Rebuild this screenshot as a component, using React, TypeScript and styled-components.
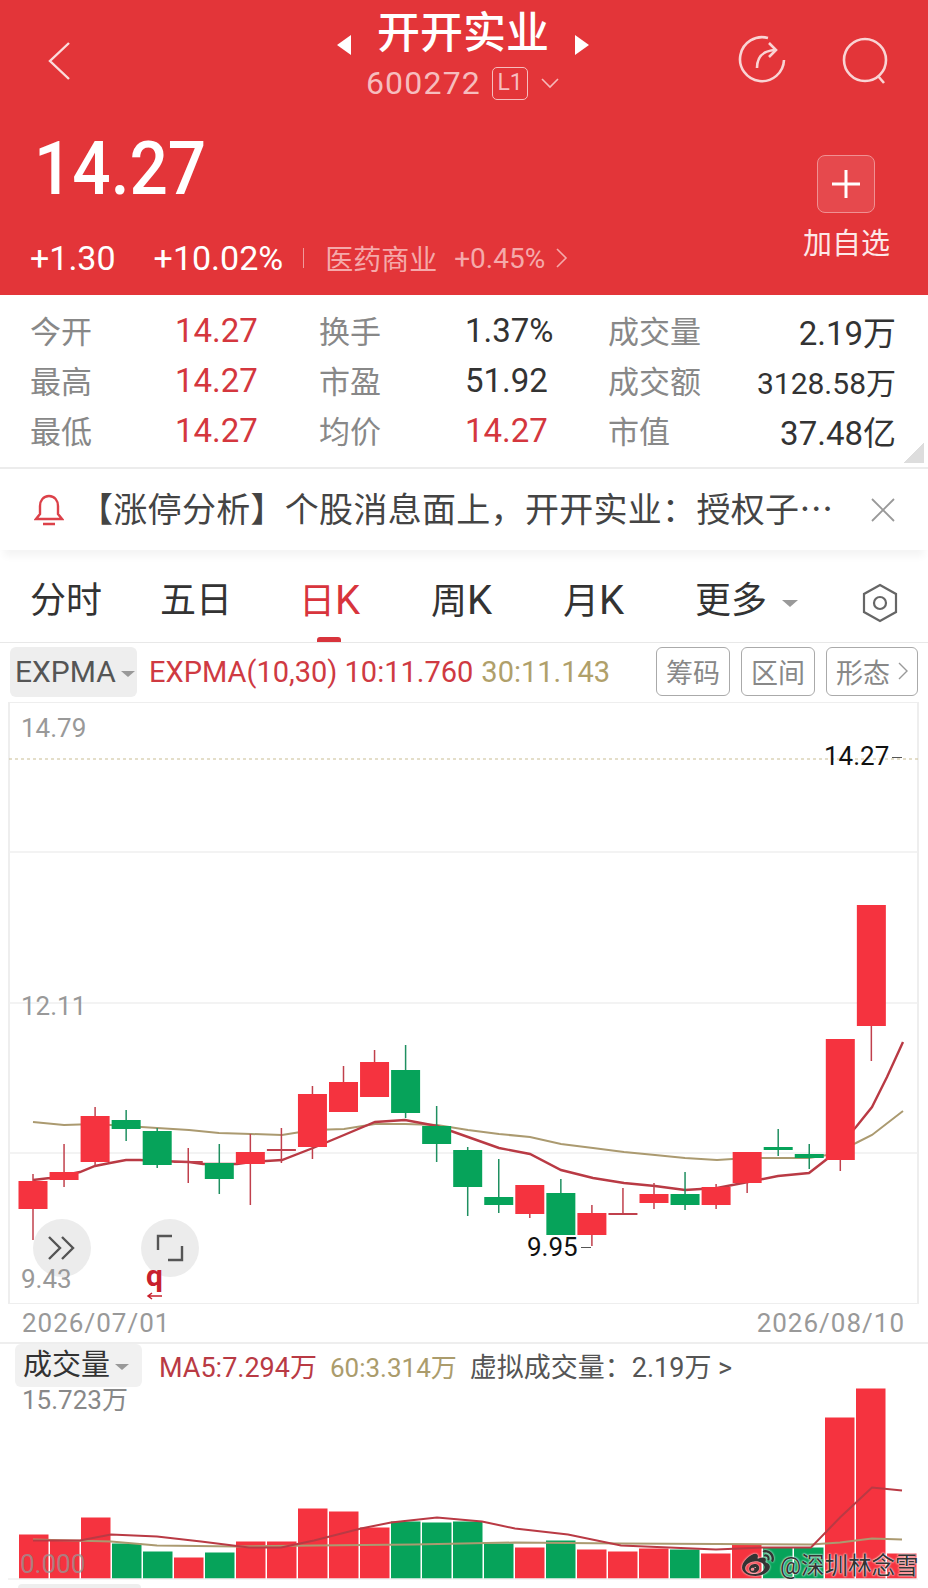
import React from 'react';
import styled, { createGlobalStyle } from 'styled-components';
import { FaWeibo } from 'react-icons/fa';

type Candle = { x: number; w: number; top: number; bottom: number; high: number; low: number; up: boolean };

const c = (i: number, top: number, bottom: number, high: number, low: number, up: boolean): Candle => ({
    x: 18.5 + i * 31.05,
    w: 29,
    top,
    bottom,
    high,
    low,
    up,
});

const candles: Candle[] = [
    c(0, 1181, 1209, 1174, 1240, true),
    c(1, 1172, 1180, 1144, 1187, true),
    c(2, 1116, 1162, 1107, 1167, true),
    c(3, 1120, 1129, 1110, 1141, false),
    c(4, 1131, 1165, 1128, 1168, false),
    c(5, 1161, 1163, 1148, 1183, true),
    c(6, 1163, 1179, 1144, 1194, false),
    c(7, 1152, 1164, 1134, 1205, true),
    c(8, 1149, 1151, 1128, 1163, true),
    c(9, 1094, 1147, 1086, 1159, true),
    c(10, 1082, 1112, 1066, 1112, true),
    c(11, 1062, 1097, 1050, 1097, true),
    c(12, 1070, 1113, 1045, 1118, false),
    c(13, 1126, 1144, 1106, 1162, false),
    c(14, 1150, 1187, 1147, 1216, false),
    c(15, 1197, 1205, 1159, 1213, false),
    c(16, 1185, 1214, 1185, 1218, true),
    c(17, 1193, 1235, 1179, 1235, false),
    c(18, 1213, 1235, 1205, 1246, true),
    c(19, 1213, 1215, 1188, 1215, true),
    c(20, 1194, 1203, 1183, 1209, true),
    c(21, 1194, 1205, 1172, 1210, false),
    c(22, 1187, 1205, 1184, 1209, true),
    c(23, 1152, 1183, 1152, 1193, true),
    c(24, 1147, 1150, 1129, 1156, false),
    c(25, 1154, 1158, 1144, 1169, false),
    c(26, 1039, 1160, 1039, 1171, true),
    c(27, 905, 1026, 905, 1061, true),
];

const ema10 =
    '33,1180 50,1178 80,1172 95,1166 110,1163 126,1160 140,1160 157,1161 189,1162 203,1164 219,1164 237,1164 251,1162 282,1160 313,1148 344,1135 375,1122 405,1120 437,1126 468,1137 499,1148 530,1154 561,1170 593,1178 624,1183 655,1186 685,1190 717,1188 748,1182 778,1176 809,1173 827,1159 856,1127 872,1107 887,1077 903,1042';
const ema30 =
    '33,1122 64,1125 95,1124 126,1126 157,1128 189,1130 219,1133 251,1134 282,1135 313,1130 344,1129 375,1124 405,1124 437,1125 468,1130 499,1134 530,1137 561,1144 593,1148 624,1152 655,1155 685,1158 717,1160 748,1158 778,1158 809,1158 827,1155 856,1143 872,1135 903,1111';

const volumes: { top: number; up: boolean }[] = [
    { top: 1534, up: true },
    { top: 1540, up: true },
    { top: 1517, up: true },
    { top: 1543, up: false },
    { top: 1551, up: false },
    { top: 1557, up: true },
    { top: 1552, up: false },
    { top: 1541, up: true },
    { top: 1541, up: true },
    { top: 1508, up: true },
    { top: 1511, up: true },
    { top: 1527, up: true },
    { top: 1521, up: false },
    { top: 1522, up: false },
    { top: 1521, up: false },
    { top: 1543, up: false },
    { top: 1547, up: true },
    { top: 1540, up: false },
    { top: 1549, up: true },
    { top: 1551, up: true },
    { top: 1548, up: true },
    { top: 1549, up: false },
    { top: 1553, up: true },
    { top: 1544, up: true },
    { top: 1547, up: false },
    { top: 1547, up: false },
    { top: 1417, up: true },
    { top: 1388, up: true },
    { top: 1553, up: true },
];

const ma5 =
    '33,1540 80,1540 111,1534 157,1536 201,1541 249,1547 281,1547 314,1540 361,1528 391,1522 437,1517 482,1521 515,1528 568,1534 621,1545 669,1547 716,1549 763,1547 811,1547 840,1517 872,1487 902,1490';
const ma60 =
    '33,1539 111,1541 157,1545 237,1546 314,1545 414,1544 515,1542 621,1543 811,1544 840,1542 872,1538 902,1539';

const stats = [
    ['今开', '14.27', '换手', '1.37%', '成交量', '2.19万'],
    ['最高', '14.27', '市盈', '51.92', '成交额', '3128.58万'],
    ['最低', '14.27', '均价', '14.27', '市值', '37.48亿'],
];

const App = () => {
    return (
        <Page>
            <GlobalStyle />
            <Header>
                <NavRow>
                    <BackIcon viewBox="0 0 24 40">
                        <path d="M22 2 L3 20 L22 38" />
                    </BackIcon>
                    <TitleBlock>
                        <TitleLine>
                            <svg width="16" height="22" viewBox="0 0 16 22">
                                <path d="M15 1 L1 11 L15 21 Z" fill="#fff" />
                            </svg>
                            <Title>开开实业</Title>
                            <svg width="16" height="22" viewBox="0 0 16 22">
                                <path d="M1 1 L15 11 L1 21 Z" fill="#fff" />
                            </svg>
                        </TitleLine>
                        <CodeLine>
                            <Code>600272</Code>
                            <LevelBadge>L1</LevelBadge>
                            <svg width="20" height="12" viewBox="0 0 20 12">
                                <path d="M2 2 L10 10 L18 2" fill="none" stroke="#f6b9ba" strokeWidth="1.6" />
                            </svg>
                        </CodeLine>
                    </TitleBlock>
                    <NavIcons>
                        <NavIcon viewBox="0 0 50 50">
                            <path d="M31 3 A22 22 0 1 0 47 25" />
                            <path d="M20 33 C20 22 25 16 38 15" />
                            <path d="M32 8 L39 15 L32 22" />
                        </NavIcon>
                        <NavIcon viewBox="0 0 50 50">
                            <circle cx="25" cy="25" r="21" />
                            <path d="M38 41 L44 48" />
                        </NavIcon>
                    </NavIcons>
                </NavRow>
                <QuoteRow>
                    <QuoteLeft>
                        <Price>14.27</Price>
                        <ChangeRow>
                            <Change>+1.30</Change>
                            <Change>+10.02%</Change>
                            <Divider />
                            <Sector>医药商业</Sector>
                            <SectorChange>+0.45%</SectorChange>
                            <svg width="13" height="22" viewBox="0 0 13 22">
                                <path d="M2 2 L11 11 L2 20" fill="none" stroke="#f5a9aa" strokeWidth="1.6" />
                            </svg>
                        </ChangeRow>
                    </QuoteLeft>
                    <AddBlock>
                        <AddButton>
                            <svg width="32" height="32" viewBox="0 0 32 32">
                                <path d="M16 2 V30 M2 16 H30" stroke="#fff" strokeWidth="3" />
                            </svg>
                        </AddButton>
                        <AddLabel>加自选</AddLabel>
                    </AddBlock>
                </QuoteRow>
            </Header>

            <Stats>
                {stats.map((row) => (
                    <React.Fragment key={row[0]}>
                        <StatLabel>{row[0]}</StatLabel>
                        <StatValue $red>{row[1]}</StatValue>
                        <StatLabel>{row[2]}</StatLabel>
                        <StatValue $red={row[3] === '14.27'}>{row[3]}</StatValue>
                        <StatLabel>{row[4]}</StatLabel>
                        <StatValue $right $small={row[5].length > 7}>{row[5]}</StatValue>
                    </React.Fragment>
                ))}
                <CornerMark />
            </Stats>

            <Notice>
                <svg width="30" height="34" viewBox="0 0 30 34">
                    <path
                        d="M15 3 C9 3 6 8 6 13 V21 L2 26 H28 L24 21 V13 C24 8 21 3 15 3 Z M9 31 H21"
                        fill="none"
                        stroke="#dc4149"
                        strokeWidth="2.4"
                    />
                </svg>
                <NoticeText>【涨停分析】个股消息面上，开开实业：授权子…</NoticeText>
                <svg width="26" height="26" viewBox="0 0 26 26">
                    <path d="M2 2 L24 24 M24 2 L2 24" stroke="#999" strokeWidth="1.8" />
                </svg>
            </Notice>

            <Tabs>
                <Tab $w={130}>分时</Tab>
                <Tab $w={139}>五日</Tab>
                <Tab $active>
                    日<TabLetter>K</TabLetter>
                    <TabMark />
                </Tab>
                <Tab>
                    周<TabLetter>K</TabLetter>
                </Tab>
                <Tab>
                    月<TabLetter>K</TabLetter>
                </Tab>
                <Tab>
                    更多
                    <MoreArrow />
                </Tab>
                <Gear viewBox="0 0 36 40">
                    <path d="M18 2 L34 11 V29 L18 38 L2 29 V11 Z" />
                    <circle cx="18" cy="20" r="6" />
                </Gear>
            </Tabs>

            <IndicatorBar>
                <Picker>
                    EXPMA
                    <DownArrow $size={6} />
                </Picker>
                <IndicatorText $tone="#cf3a42">EXPMA(10,30) 10:11.760</IndicatorText>
                <IndicatorText $tone="#b0a06a">30:11.143</IndicatorText>
                <ChipGroup>
                    <Chip>筹码</Chip>
                    <Chip>区间</Chip>
                    <Chip>
                        形态
                        <svg width="10" height="20" viewBox="0 0 10 20">
                            <path d="M1 2 L9 10 L1 18" fill="none" stroke="#999" strokeWidth="1.4" />
                        </svg>
                    </Chip>
                </ChipGroup>
            </IndicatorBar>

            <PriceChart>
                <ChartSvg width="928" height="602" viewBox="0 702 928 602">
                    <rect x="9" y="702" width="909" height="602" fill="#fff" stroke="#eee" strokeWidth="2" />
                    {[852, 1003, 1153].map((y) => (
                        <line key={y} x1="9" x2="918" y1={y} y2={y} stroke="#efefef" strokeWidth="1.5" />
                    ))}
                    <line x1="9" x2="918" y1="759" y2="759" stroke="#c9bd94" strokeWidth="1.2" strokeDasharray="3 3" />
                    <polyline points={ema30} fill="none" stroke="#ab9a70" strokeWidth="2" />
                    <polyline points={ema10} fill="none" stroke="#b93a44" strokeWidth="2.4" />
                    {candles.map((k) => {
                        const tone = k.up ? '#f5333f' : '#06a35a';
                        const mid = k.x + k.w / 2;
                        const wick = k.up ? '#c0404c' : '#1f8f60';
                        return (
                            <g key={k.x}>
                                <line x1={mid} x2={mid} y1={k.high} y2={k.low} stroke={wick} strokeWidth="1.5" />
                                <rect x={k.x} y={k.top} width={k.w} height={k.bottom - k.top} fill={k.bottom - k.top < 3 ? wick : tone} />
                            </g>
                        );
                    })}
                </ChartSvg>
                <RoundButton $x={33}>
                    <svg width="30" height="26" viewBox="0 0 30 26">
                        <path d="M2 2 L13 13 L2 24 M15 2 L26 13 L15 24" fill="none" stroke="#555" strokeWidth="2.4" />
                    </svg>
                </RoundButton>
                <RoundButton $x={141}>
                    <svg width="28" height="28" viewBox="0 0 28 28">
                        <path d="M16 2 H2 V16 M12 26 H26 V12" fill="none" stroke="#555" strokeWidth="2.4" />
                    </svg>
                </RoundButton>
                <AxisLabel $x={21} $y={11}>14.79</AxisLabel>
                <AxisLabel $x={21} $y={289}>12.11</AxisLabel>
                <AxisLabel $x={21} $y={562}>9.43</AxisLabel>
                <PeakLabel $x={824} $y={39}>14.27</PeakLabel>
                <PeakDash $x={892} $y={55} />
                <PeakLabel $x={527} $y={530}>9.95</PeakLabel>
                <PeakDash $x={581} $y={545} />
                <Marker>q</Marker>
                <MarkerArrow width="16" height="8" viewBox="0 0 16 8">
                    <path d="M16 4 H2 M6 1 L2 4 L6 7" fill="none" stroke="#c8202c" strokeWidth="1.5" />
                </MarkerArrow>
            </PriceChart>

            <DateRow>
                <span>2026/07/01</span>
                <span>2026/08/10</span>
            </DateRow>

            <VolumeHeader>
                <VolumePicker>
                    成交量
                    <DownArrow $size={6} />
                </VolumePicker>
                <VolumeText $tone="#b93a44">MA5:7.294万</VolumeText>
                <VolumeText $tone="#ab9c6c" $size={26}>60:3.314万</VolumeText>
                <VolumeText $tone="#555">虚拟成交量：2.19万 &gt;</VolumeText>
            </VolumeHeader>

            <VolumeChart>
                <ChartSvg width="928" height="192" viewBox="0 1387.5 928 192">
                    {volumes.map((v, i) => (
                        <rect
                            key={i}
                            x={19 + i * 31}
                            y={v.top}
                            width="29.5"
                            height={1578 - v.top}
                            fill={v.up ? '#f5333f' : '#06a35a'}
                        />
                    ))}
                    <polyline points={ma60} fill="none" stroke="#ab9a70" strokeWidth="2" />
                    <polyline points={ma5} fill="none" stroke="#b93a44" strokeWidth="2" />
                    <line x1="8" x2="918" y1="1578.5" y2="1578.5" stroke="#e8e8e8" />
                </ChartSvg>
                <VolumeMax>15.723万</VolumeMax>
                <VolumeZero>0.000</VolumeZero>
                <Watermark>
                    <FaWeibo size={32} />
                    <span>@深圳林念雪</span>
                </Watermark>
            </VolumeChart>
            <BottomChip />
        </Page>
    );
};

const GlobalStyle = createGlobalStyle`
    html, body {
        margin: 0;
        padding: 0;
        background: #fff;
    }
`;

const Page = styled.div`
    width: 928px;
    height: 1588px;
    overflow: hidden;
    background: #fff;
    font-family: 'Roboto', 'Noto Sans CJK SC', sans-serif;
`;

/* Header */
const Header = styled.div`
    height: 295px;
    box-sizing: border-box;
    background: #e33539;
    color: #fff;
    display: flex;
    flex-flow: column;
`;

const NavRow = styled.div`
    height: 128px;
    display: grid;
    grid-template-columns: 1fr auto 1fr;
    padding: 0 49px 0 47px;
`;

const BackIcon = styled.svg`
    width: 24px;
    height: 40px;
    margin-top: 41px;
    fill: none;
    stroke: #fbdcdc;
    stroke-width: 2.4;
`;

const TitleBlock = styled.div`
    display: flex;
    flex-flow: column;
    align-items: center;
`;

const TitleLine = styled.div`
    display: flex;
    align-items: center;
    gap: 25px;
    height: 66px;

    svg {
        margin-top: 24px;
    }
`;

const Title = styled.div`
    font-size: 43px;
    line-height: 66px;
    font-weight: 500;
`;

const CodeLine = styled.div`
    display: flex;
    align-items: center;
    gap: 11px;
    height: 34px;
    color: #f6bdbe;

    svg {
        margin-left: 1px;
    }
`;

const Code = styled.div`
    font-size: 32px;
    letter-spacing: 1.2px;
`;

const LevelBadge = styled.div`
    width: 36px;
    height: 33px;
    box-sizing: border-box;
    border: 1.5px solid #f6bdbe;
    border-radius: 5px;
    font-size: 23px;
    line-height: 30px;
    text-align: center;
`;

const NavIcons = styled.div`
    display: flex;
    justify-content: flex-end;
    gap: 53px;
    margin-right: -11px;
    padding-top: 35px;
`;

const NavIcon = styled.svg`
    width: 50px;
    height: 50px;
    fill: none;
    stroke: #f9d4d4;
    stroke-width: 2.6;
`;

const QuoteRow = styled.div`
    flex: 1;
    display: flex;
    justify-content: space-between;
    padding: 0 38px 0 30px;
`;

const QuoteLeft = styled.div`
    display: flex;
    flex-flow: column;
`;

const Price = styled.div`
    font-size: 75px;
    line-height: 80px;
    font-weight: 500;
    margin-left: 4px;
    transform: scaleX(0.9);
    transform-origin: left;
`;

const ChangeRow = styled.div`
    display: flex;
    align-items: center;
    margin-top: 30px;
`;

const Change = styled.div`
    font-size: 34px;
    line-height: 40px;

    & + & {
        margin-left: 38px;
    }
`;

const Divider = styled.div`
    width: 1px;
    height: 20px;
    background: #f09a9b;
    margin: 0 21px 0 20px;
`;

const Sector = styled.div`
    font-size: 28px;
    color: #f5a9aa;
    margin-right: 17px;
`;

const SectorChange = styled.div`
    font-size: 28px;
    color: #f5a9aa;
    margin-right: 10px;
`;

const AddBlock = styled.div`
    display: flex;
    flex-flow: column;
    align-items: center;
    padding-top: 27px;
`;

const AddButton = styled.div`
    width: 58px;
    height: 58px;
    box-sizing: border-box;
    border: 1px solid #f09092;
    border-radius: 8px;
    background: #e6494d;
    display: flex;
    align-items: center;
    justify-content: center;
`;

const AddLabel = styled.div`
    font-size: 29px;
    margin-top: 7px;
    color: #fde8e8;
`;

/* Stats */
const Stats = styled.div`
    position: relative;
    height: 174px;
    box-sizing: border-box;
    padding: 9px 32px 0 30px;
    border-bottom: 2px solid #ececec;
    display: grid;
    grid-template-columns: 145px 144px 146px 143px auto 1fr;
    grid-auto-rows: 50px;
    align-items: center;
`;

const StatLabel = styled.div`
    font-size: 31px;
    color: #888;
`;

const StatValue = styled.div<{ $red?: boolean; $right?: boolean; $small?: boolean }>`
    padding-top: 3px;
    font-size: ${(p) => (p.$small ? 30 : 33)}px;
    color: ${(p) => (p.$red ? '#d4373e' : '#333')};
    text-align: ${(p) => (p.$right ? 'right' : 'left')};
    white-space: nowrap;
`;

const CornerMark = styled.div`
    position: absolute;
    right: 4px;
    bottom: 4px;
    width: 20px;
    height: 20px;
    background: linear-gradient(135deg, transparent 50%, #ddd 50%);
`;

/* Notice */
const Notice = styled.div`
    height: 81px;
    padding: 0 32px 0 34px;
    display: flex;
    align-items: center;
    background: #fff;
    box-shadow: 0 10px 8px -4px #f4f4f4;
    position: relative;
`;

const NoticeText = styled.div`
    flex: 1;
    margin-top: -4px;
    padding-left: 15px;
    font-family: 'Noto Sans CJK SC', sans-serif;
    font-size: 34px;
    letter-spacing: 0.3px;
    color: #444;
    white-space: nowrap;
`;

/* Tabs */
const Tabs = styled.div`
    height: 93px;
    box-sizing: border-box;
    padding: 10px 30px 0 30px;
    border-bottom: 1.5px solid #e8e8e8;
    display: flex;
    align-items: center;
`;

const Tab = styled.div<{ $active?: boolean; $w?: number }>`
    position: relative;
    width: ${(p) => p.$w ?? 132}px;
    height: 82px;
    line-height: 82px;
    font-size: 36px;
    color: ${(p) => (p.$active ? '#d8343c' : '#333')};
`;

const TabLetter = styled.span`
    font-size: 40px;
`;

const TabMark = styled.div`
    position: absolute;
    left: 18px;
    bottom: 0;
    width: 24px;
    height: 5px;
    border-radius: 3px 3px 0 0;
    background: #d8343c;
`;

const DownArrow = styled.span<{ $size: number }>`
    display: inline-block;
    margin-left: 5px;
    vertical-align: middle;
    border-style: solid;
    border-width: ${(p) => p.$size}px ${(p) => p.$size + 1}px 0;
    border-color: #999 transparent transparent;
`;

const MoreArrow = styled(DownArrow).attrs({ $size: 7 })`
    margin-left: 15px;
`;

const Gear = styled.svg`
    width: 36px;
    height: 40px;
    margin-top: 4px;
    margin-left: auto;
    margin-right: 0;
    fill: none;
    stroke: #666;
    stroke-width: 2.2;
`;

/* Indicator bar */
const IndicatorBar = styled.div`
    height: 56px;
    box-sizing: border-box;
    padding: 2px 10px 0 10px;
    display: flex;
    align-items: center;
`;

const Picker = styled.div`
    width: 127px;
    height: 50px;
    box-sizing: border-box;
    padding-left: 5px;
    background: #eee;
    border-radius: 6px;
    font-size: 30px;
    line-height: 50px;
    color: #555;
    white-space: nowrap;
    margin-right: 12px;
`;

const IndicatorText = styled.div<{ $tone: string }>`
    font-size: 29px;
    color: ${(p) => p.$tone};
    margin-right: 8px;
    white-space: nowrap;
`;

const ChipGroup = styled.div`
    margin-left: auto;
    margin-top: -2px;
    display: flex;
    gap: 11px;
`;

const Chip = styled.div`
    height: 49px;
    padding: 0 9px;
    box-sizing: border-box;
    border: 1.5px solid #aaa;
    border-radius: 6px;
    display: flex;
    align-items: center;
    gap: 8px;
    font-size: 27px;
    color: #888;
`;

/* Price chart */
const PriceChart = styled.div`
    position: relative;
    height: 602px;
    margin-top: 2.5px;
`;

const ChartSvg = styled.svg`
    display: block;
`;

const AxisLabel = styled.div<{ $x: number; $y: number }>`
    position: absolute;
    left: ${(p) => p.$x}px;
    top: ${(p) => p.$y}px;
    font-size: 26px;
    line-height: 30px;
    color: #999;
`;

const PeakLabel = styled.div<{ $x: number; $y: number }>`
    position: absolute;
    left: ${(p) => p.$x}px;
    top: ${(p) => p.$y}px;
    font-size: 26px;
    line-height: 30px;
    color: #111;
`;

const PeakDash = styled.div<{ $x: number; $y: number }>`
    position: absolute;
    left: ${(p) => p.$x}px;
    top: ${(p) => p.$y}px;
    width: 10px;
    height: 1px;
    background: #555;
`;

const RoundButton = styled.div<{ $x: number }>`
    position: absolute;
    left: ${(p) => p.$x}px;
    top: 517px;
    width: 58px;
    height: 58px;
    border-radius: 50%;
    background: #ececec;
    display: flex;
    align-items: center;
    justify-content: center;
`;

const Marker = styled.div`
    position: absolute;
    left: 146px;
    top: 558px;
    font-size: 30px;
    line-height: 32px;
    font-weight: 700;
    color: #c8202c;
`;

const MarkerArrow = styled.svg`
    position: absolute;
    left: 146px;
    top: 590px;
`;

/* Dates and volume */
const DateRow = styled.div`
    height: 40px;
    box-sizing: border-box;
    padding: 0 23px 0 22px;
    border-bottom: 2px solid #eee;
    display: flex;
    align-items: center;
    justify-content: space-between;
    font-size: 26px;
    letter-spacing: 1px;
    color: #999;
`;

const VolumeHeader = styled.div`
    height: 44px;
    box-sizing: border-box;
    padding: 0 0 0 15px;
    display: flex;
    align-items: center;
`;

const VolumePicker = styled.div`
    width: 127px;
    height: 43px;
    box-sizing: border-box;
    padding-left: 8px;
    margin-right: 17px;
    background: #f1f1f1;
    border-radius: 6px;
    font-size: 29px;
    line-height: 43px;
    color: #333;
    white-space: nowrap;
`;

const VolumeText = styled.div<{ $tone: string; $size?: number }>`
    font-size: ${(p) => p.$size ?? 27}px;
    color: ${(p) => p.$tone};
    margin-right: 13px;
    white-space: nowrap;
`;

const VolumeChart = styled.div`
    position: relative;
    height: 192px;
`;

const VolumeMax = styled.div`
    position: absolute;
    left: 22px;
    top: -3px;
    font-size: 26px;
    line-height: 30px;
    color: #888;
`;

const VolumeZero = styled.div`
    position: absolute;
    left: 20px;
    top: 161px;
    font-size: 26px;
    line-height: 30px;
    color: rgba(150, 150, 150, 0.75);
`;

const Watermark = styled.div`
    position: absolute;
    left: 742px;
    top: 159px;
    display: flex;
    align-items: center;
    gap: 6px;
    font-size: 23.5px;
    color: #333;
    text-shadow: 0 0 2px #fff, 0 0 2px #fff;
    white-space: nowrap;

    svg {
        filter: drop-shadow(0 0 1px #fff);
    }
`;

const BottomChip = styled.div`
    width: 123px;
    height: 6px;
    margin: 4px 0 0 18px;
    background: #eee;
    border-radius: 4px 4px 0 0;
`;

export default App;
